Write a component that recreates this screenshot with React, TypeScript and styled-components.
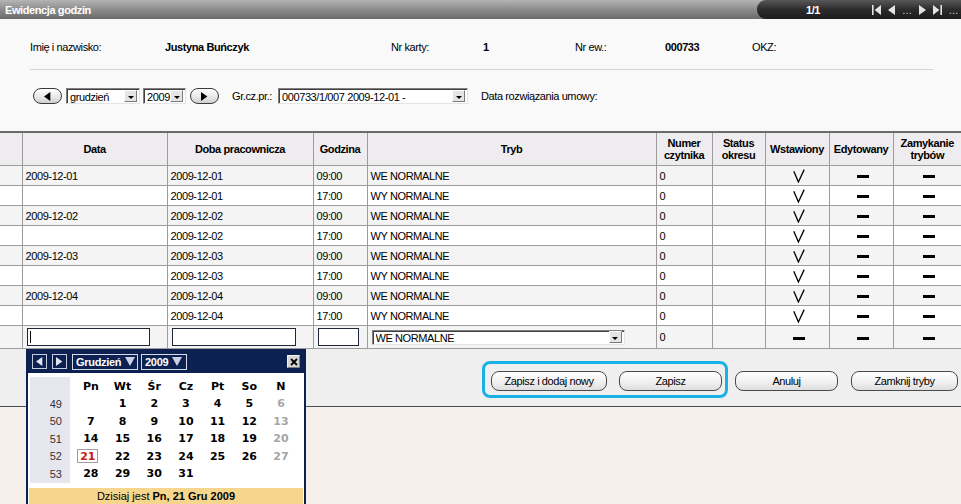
import React from "react";
import styled, { createGlobalStyle } from "styled-components";

const GlobalStyle = createGlobalStyle`
  html, body { margin: 0; padding: 0; }
  body {
    font-family: "Liberation Sans", Arial, sans-serif;
    font-size: 11px;
    color: #000;
    background: #f7efe9;
  }
`;

const Page = styled.div`
  position: relative;
  width: 961px;
  height: 504px;
  overflow: hidden;
  display: flex;
  flex-direction: column;
  background: #f7efe9;
  letter-spacing: -0.4px;
`;

/* ---------- title bar ---------- */
const TitleBar = styled.div`
  flex: none;
  height: 19px;
  display: flex;
  align-items: center;
  justify-content: space-between;
  background: linear-gradient(#b4b4b4, #8c8c8c 50%, #6a6a6a);
`;

const Title = styled.div`
  color: #fff;
  font-weight: bold;
  padding-left: 5px;
`;

const Pager = styled.div`
  width: 204px;
  height: 19px;
  box-sizing: border-box;
  display: flex;
  align-items: center;
  padding-left: 49px;
  background: linear-gradient(#585858, #2c2c2c 50%, #1c1c1c);
  border-radius: 9px 0 0 9px;
  color: #fff;
`;

const PageCount = styled.span`
  font-weight: bold;
  width: 66px;
`;

const PagerIcons = styled.div`
  display: flex;
  align-items: center;
  gap: 7px;
  color: #e4e4e4;
`;

const Dots = styled.span`
  font-size: 10px;
  line-height: 10px;
  padding-top: 3px;
  color: #d8d8d8;
`;

/* ---------- top info ---------- */
const Header = styled.div`
  flex: none;
  background: #f9f9f9;
  padding-bottom: 27px;
`;

const InfoRow = styled.div`
  display: grid;
  grid-template-columns: 135px 226px 92px 92px 90px 87px auto;
  padding-left: 30px;
  margin-top: 22px;
  height: 13px;
  line-height: 13px;
`;

const Text = styled.span<{ $bold?: boolean; $ml?: number }>`
  font-weight: ${(p) => (p.$bold ? "bold" : "normal")};
  margin-left: ${(p) => p.$ml ?? 0}px;
  white-space: nowrap;
`;

const Separator = styled.div`
  height: 1px;
  margin: 15px 28px 0 30px;
  background: #d2d2d2;
`;

const NavRow = styled.div`
  display: flex;
  align-items: center;
  height: 16px;
  margin-top: 18px;
  padding-left: 33px;
`;

const PillButton = styled.div<{ $ml?: number }>`
  width: 29px;
  height: 16px;
  box-sizing: border-box;
  margin-left: ${(p) => p.$ml ?? 0}px;
  border: 1px solid #3a3a3a;
  border-radius: 8px;
  background: linear-gradient(#ffffff, #e6e6e6 60%, #cfcfcf);
  display: flex;
  align-items: center;
  justify-content: center;
`;

const SelectBox = styled.div<{ $w: number; $ml?: number }>`
  width: ${(p) => p.$w}px;
  height: 16px;
  margin-left: ${(p) => p.$ml ?? 0}px;
  box-sizing: border-box;
  display: flex;
  align-items: center;
  background: #fff;
  border: 1px solid;
  border-color: #808080 #e4e4e4 #e4e4e4 #808080;
  box-shadow: inset 1px 1px 0 #404040;
  padding-left: 3px;
`;

const SelectText = styled.span`
  flex: 1;
  white-space: nowrap;
  overflow: hidden;
  padding-top: 1px;
`;

const DropBtn = styled.span`
  width: 13px;
  height: 12px;
  box-sizing: border-box;
  margin-right: 2px;
  background: #e4e4e4;
  border: 1px solid;
  border-color: #ffffff #7a7a7a #7a7a7a #ffffff;
  display: flex;
  align-items: center;
  justify-content: center;
`;

const TinyDown = styled.span`
  width: 0;
  height: 0;
  border-left: 3px solid transparent;
  border-right: 3px solid transparent;
  border-top: 3px solid #000;
  margin-top: 2px;
`;

/* ---------- table ---------- */
const Table = styled.table`
  width: 961px;
  table-layout: fixed;
  border-collapse: collapse;
  border-top: 2px solid #6b6b6b;
  flex: none;
`;

const Th = styled.th`
  height: 32px;
  padding: 0 2px;
  background: #eeecef;
  font-weight: bold;
  text-align: center;
  line-height: 12px;
  border-left: 1px solid #9c9c9c;
  border-bottom: 1px solid #9c9c9c;
  &:first-child { border-left: none; }
`;

const Tr = styled.tr<{ $shade: boolean }>`
  background: ${(p) => (p.$shade ? "#f4f4f4" : "#ffffff")};
`;

const Td = styled.td<{ $center?: boolean; $h?: number }>`
  height: ${(p) => p.$h ?? 19}px;
  padding: 0 0 0 3px;
  text-align: ${(p) => (p.$center ? "center" : "left")};
  white-space: nowrap;
  overflow: hidden;
  border-left: 1px solid #9c9c9c;
  border-bottom: 1px solid #9c9c9c;
  &:first-child { border-left: none; }
`;

const Dash = styled.span`
  display: inline-block;
  width: 12px;
  height: 3px;
  background: #000;
  vertical-align: middle;
`;

const FakeInput = styled.div<{ $w: number }>`
  width: ${(p) => p.$w}px;
  height: 18px;
  box-sizing: border-box;
  margin-left: 1px;
  background: #fff;
  border: 1px solid #1e2638;
  padding: 2px 0 0 2px;
`;

const Caret = styled.span`
  display: block;
  width: 1px;
  height: 12px;
  background: #000;
`;

const RowSelect = styled(SelectBox)`
  margin-left: 1px;
  height: 15px;
`;

/* ---------- footer ---------- */
const FooterBar = styled.div`
  flex: none;
  height: 58px;
  box-sizing: border-box;
  background: #efefef;
  border-bottom: 1px solid #4e4e4e;
  display: flex;
  justify-content: flex-end;
  align-items: flex-start;
  padding: 12px 3px 0 0;
`;

const Highlight = styled.div`
  display: flex;
  gap: 12px;
  padding: 7px 3px 4px 6px;
  border: 3px solid #19b2e6;
  border-radius: 8px;
`;

const ActionButton = styled.div<{ $w: number; $ml?: number; $mt?: number }>`
  width: ${(p) => p.$w}px;
  height: 20px;
  box-sizing: border-box;
  margin-left: ${(p) => p.$ml ?? 0}px;
  margin-top: ${(p) => p.$mt ?? 0}px;
  border: 1px solid #4a4a4a;
  border-radius: 8px;
  background: linear-gradient(#ffffff, #f2f2f2 50%, #dedede);
  display: flex;
  align-items: center;
  justify-content: center;
  white-space: nowrap;
`;

const Rest = styled.div`
  flex: 1;
  background: #f7efe9;
`;

/* ---------- calendar popup ---------- */
const Calendar = styled.div`
  position: absolute;
  left: 26px;
  top: 349px;
  width: 280px;
  height: 170px;
  box-sizing: border-box;
  border: 2px solid #0c2152;
  border-top-width: 1px;
  background: #fff;
  letter-spacing: 0;
`;

const CalHead = styled.div`
  height: 23px;
  background: #0c2152;
  display: flex;
  align-items: center;
  padding: 0 4px;
`;

const CalArrow = styled.div<{ $ml?: number }>`
  width: 15px;
  height: 15px;
  box-sizing: border-box;
  margin-left: ${(p) => p.$ml ?? 0}px;
  border: 1px solid #c4cce0;
  display: flex;
  align-items: center;
  justify-content: center;
`;

const CalSelect = styled.div<{ $w: number; $ml?: number }>`
  width: ${(p) => p.$w}px;
  height: 16px;
  box-sizing: border-box;
  margin-left: ${(p) => p.$ml ?? 0}px;
  border: 1px solid #d6dbe8;
  color: #fff;
  font-weight: bold;
  font-size: 11px;
  letter-spacing: -0.3px;
  display: flex;
  align-items: center;
  gap: 4px;
  padding: 0 2px 0 3px;
  white-space: nowrap;
`;

const CloseBtn = styled.div`
  margin-left: auto;
  width: 13px;
  height: 13px;
  box-sizing: border-box;
  background: #d6d6d6;
  border: 1px solid;
  border-color: #f4f4f4 #808080 #808080 #f4f4f4;
  display: flex;
  align-items: center;
  justify-content: center;
`;

const CalGrid = styled.div`
  display: grid;
  grid-template-columns: 45px repeat(7, 31.7px);
  grid-template-rows: 18px repeat(5, 17.5px);
  padding: 4px 0 0 2px;
  font-family: "DejaVu Sans", Verdana, sans-serif;
  font-weight: bold;
  font-size: 11px;
`;

const WeekCell = styled.div`
  margin-right: 5px;
  background: #e6e6ee;
  display: flex;
  align-items: center;
  justify-content: flex-end;
  padding-right: 8px;
  font-family: "Liberation Sans", Arial, sans-serif;
  font-weight: normal;
  color: #333;
`;

const DayName = styled.div`
  display: flex;
  align-items: center;
  justify-content: center;
`;

const DayCell = styled.div<{ $kind: "normal" | "sunday" | "today" }>`
  display: flex;
  align-items: center;
  justify-content: center;
  color: ${(p) => (p.$kind === "sunday" ? "#a6a6a6" : p.$kind === "today" ? "#c81818" : "#000")};
`;

const TodayMark = styled.span`
  display: flex;
  align-items: center;
  justify-content: center;
  width: 21px;
  height: 14px;
  box-sizing: border-box;
  border: 1px solid #a0a0a0;
  margin-left: -6px;
`;

const CalFooter = styled.div`
  margin: 5px 1px 0;
  height: 22px;
  background: #f6d68c;
  text-align: center;
  line-height: 17px;
  font-size: 11px;
`;

/* ---------- icons ---------- */
const TriLeft = ({ c = "#000", s = 9 }: { c?: string; s?: number }) => (
  <svg width={s * 0.7} height={s} viewBox="0 0 7 10">
    <path d="M7 0 L0 5 L7 10 Z" fill={c} />
  </svg>
);
const TriRight = ({ c = "#000", s = 9 }: { c?: string; s?: number }) => (
  <svg width={s * 0.7} height={s} viewBox="0 0 7 10">
    <path d="M0 0 L7 5 L0 10 Z" fill={c} />
  </svg>
);
const FirstIcon = () => (
  <svg width="9" height="10" viewBox="0 0 9 10">
    <rect x="0" y="0" width="1.6" height="10" fill="#e4e4e4" />
    <path d="M9 0 L2.6 5 L9 10 Z" fill="#e4e4e4" />
  </svg>
);
const LastIcon = () => (
  <svg width="9" height="10" viewBox="0 0 9 10">
    <path d="M0 0 L6.4 5 L0 10 Z" fill="#e4e4e4" />
    <rect x="7.4" y="0" width="1.6" height="10" fill="#e4e4e4" />
  </svg>
);
const Check = () => (
  <svg width="12" height="14" viewBox="0 0 12 14" style={{ verticalAlign: "middle" }}>
    <path d="M0.8 2.2 L5.4 13 L11.2 0.6" fill="none" stroke="#000" strokeWidth="1.3" />
  </svg>
);
const CalDown = () => (
  <svg width="10" height="9" viewBox="0 0 10 9" style={{ flex: "none" }}>
    <path d="M0 0 L10 0 L5 9 Z" fill="#c9d1e4" />
  </svg>
);
const CloseX = () => (
  <svg width="8" height="8" viewBox="0 0 8 8">
    <path d="M1 1 L7 7 M7 1 L1 7" stroke="#000" strokeWidth="1.8" />
  </svg>
);

/* ---------- data ---------- */
const cols = [22, 145, 146, 54, 289, 56, 53, 64, 64, 68];

const rows: [string, string, string, string][] = [];
["01", "02", "03", "04"].forEach((d) => {
  rows.push([`2009-12-${d}`, `2009-12-${d}`, "09:00", "WE NORMALNE"]);
  rows.push(["", `2009-12-${d}`, "17:00", "WY NORMALNE"]);
});

const weeks: [number, (number | null)[]][] = [
  [49, [null, 1, 2, 3, 4, 5, 6]],
  [50, [7, 8, 9, 10, 11, 12, 13]],
  [51, [14, 15, 16, 17, 18, 19, 20]],
  [52, [21, 22, 23, 24, 25, 26, 27]],
  [53, [28, 29, 30, 31, null, null, null]],
];
const dayNames = ["Pn", "Wt", "Śr", "Cz", "Pt", "So", "N"];

export default function App() {
  return (
    <>
      <GlobalStyle />
      <Page>
        <TitleBar>
          <Title>Ewidencja godzin</Title>
          <Pager>
            <PageCount>1/1</PageCount>
            <PagerIcons>
              <FirstIcon />
              <TriLeft c="#e4e4e4" s={10} />
              <Dots>…</Dots>
              <TriRight c="#e4e4e4" s={10} />
              <LastIcon />
              <Dots>…</Dots>
            </PagerIcons>
          </Pager>
        </TitleBar>

        <Header>
          <InfoRow>
            <Text>Imię i nazwisko:</Text>
            <Text $bold>Justyna Buńczyk</Text>
            <Text>Nr karty:</Text>
            <Text $bold>1</Text>
            <Text>Nr ew.:</Text>
            <Text $bold>000733</Text>
            <Text>OKZ:</Text>
          </InfoRow>
          <Separator />
          <NavRow>
            <PillButton>
              <TriLeft />
            </PillButton>
            <SelectBox $w={74} $ml={4}>
              <SelectText>grudzień</SelectText>
              <DropBtn>
                <TinyDown />
              </DropBtn>
            </SelectBox>
            <SelectBox $w={43} $ml={3}>
              <SelectText>2009</SelectText>
              <DropBtn>
                <TinyDown />
              </DropBtn>
            </SelectBox>
            <PillButton $ml={4}>
              <TriRight />
            </PillButton>
            <Text $ml={13}>Gr.cz.pr.:</Text>
            <SelectBox $w={190} $ml={6}>
              <SelectText>000733/1/007 2009-12-01 -</SelectText>
              <DropBtn>
                <TinyDown />
              </DropBtn>
            </SelectBox>
            <Text $ml={13}>Data rozwiązania umowy:</Text>
          </NavRow>
        </Header>

        <Table>
          <colgroup>
            {cols.map((w, i) => (
              <col key={i} style={{ width: w }} />
            ))}
          </colgroup>
          <thead>
            <tr>
              <Th />
              <Th>Data</Th>
              <Th>Doba pracownicza</Th>
              <Th>Godzina</Th>
              <Th>Tryb</Th>
              <Th>
                Numer
                <br />
                czytnika
              </Th>
              <Th>
                Status
                <br />
                okresu
              </Th>
              <Th>Wstawiony</Th>
              <Th>Edytowany</Th>
              <Th>
                Zamykanie
                <br />
                trybów
              </Th>
            </tr>
          </thead>
          <tbody>
            {rows.map((r, i) => (
              <Tr key={i} $shade={i % 2 === 0}>
                <Td />
                <Td>{r[0]}</Td>
                <Td>{r[1]}</Td>
                <Td>{r[2]}</Td>
                <Td>{r[3]}</Td>
                <Td>0</Td>
                <Td />
                <Td $center>
                  <Check />
                </Td>
                <Td $center>
                  <Dash />
                </Td>
                <Td $center>
                  <Dash />
                </Td>
              </Tr>
            ))}
            <Tr $shade>
              <Td $h={22} />
              <Td $h={22}>
                <FakeInput $w={123}>
                  <Caret />
                </FakeInput>
              </Td>
              <Td $h={22}>
                <FakeInput $w={124} />
              </Td>
              <Td $h={22}>
                <FakeInput $w={41} />
              </Td>
              <Td $h={22}>
                <RowSelect $w={253}>
                  <SelectText>WE NORMALNE</SelectText>
                  <DropBtn>
                    <TinyDown />
                  </DropBtn>
                </RowSelect>
              </Td>
              <Td $h={22}>0</Td>
              <Td $h={22} />
              <Td $h={22} $center>
                <Dash />
              </Td>
              <Td $h={22} $center>
                <Dash />
              </Td>
              <Td $h={22} $center>
                <Dash />
              </Td>
            </Tr>
          </tbody>
        </Table>

        <FooterBar>
          <Highlight>
            <ActionButton $w={116}>Zapisz i dodaj nowy</ActionButton>
            <ActionButton $w={103}>Zapisz</ActionButton>
          </Highlight>
          <ActionButton $w={103} $ml={7} $mt={10}>
            Anuluj
          </ActionButton>
          <ActionButton $w={107} $ml={13} $mt={10}>
            Zamknij tryby
          </ActionButton>
        </FooterBar>
        <Rest />

        <Calendar>
          <CalHead>
            <CalArrow>
              <TriLeft c="#dfe4ef" s={9} />
            </CalArrow>
            <CalArrow $ml={5}>
              <TriRight c="#dfe4ef" s={9} />
            </CalArrow>
            <CalSelect $w={66} $ml={5}>
              Grudzień
              <CalDown />
            </CalSelect>
            <CalSelect $w={46} $ml={3}>
              2009
              <CalDown />
            </CalSelect>
            <CloseBtn>
              <CloseX />
            </CloseBtn>
          </CalHead>
          <CalGrid>
            <WeekCell />
            {dayNames.map((d) => (
              <DayName key={d}>{d}</DayName>
            ))}
            {weeks.map(([wk, days]) => (
              <React.Fragment key={wk}>
                <WeekCell>{wk}</WeekCell>
                {days.map((d, j) => (
                  <DayCell
                    key={j}
                    $kind={d === 21 ? "today" : j === 6 ? "sunday" : "normal"}
                  >
                    {d === 21 ? <TodayMark>21</TodayMark> : d ?? ""}
                  </DayCell>
                ))}
              </React.Fragment>
            ))}
          </CalGrid>
          <CalFooter>
            Dzisiaj jest <b>Pn, 21 Gru 2009</b>
          </CalFooter>
        </Calendar>
      </Page>
    </>
  );
}
